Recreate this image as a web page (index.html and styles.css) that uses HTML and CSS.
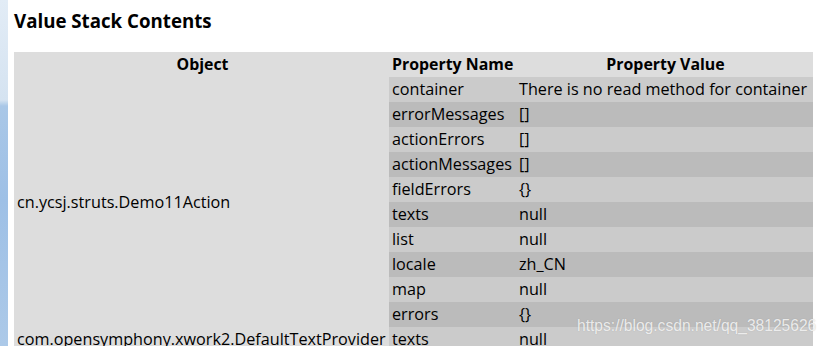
FILE: index.html
```html
<!DOCTYPE html>
<html>
<head>
<meta charset="utf-8">
<link rel="stylesheet" href="styles.css">
</head>
<body>
<div class="frame"></div>
<main class="page">
  <h3 class="title">Value Stack Contents</h3>
  <table class="stack">
    <colgroup>
      <col class="c-obj">
      <col class="c-name">
      <col class="c-val">
    </colgroup>
    <tr class="head">
      <th>Object</th>
      <th class="left">Property Name</th>
      <th>Property Value</th>
    </tr>
    <tr class="odd"><td class="obj" rowspan="10">cn.ycsj.struts.Demo11Action</td><td>container</td><td>There is no read method for container</td></tr>
    <tr class="even"><td>errorMessages</td><td>[]</td></tr>
    <tr class="odd"><td>actionErrors</td><td>[]</td></tr>
    <tr class="even"><td>actionMessages</td><td>[]</td></tr>
    <tr class="odd"><td>fieldErrors</td><td>{}</td></tr>
    <tr class="even"><td>texts</td><td>null</td></tr>
    <tr class="odd"><td>list</td><td>null</td></tr>
    <tr class="even"><td>locale</td><td>zh_CN</td></tr>
    <tr class="odd"><td>map</td><td>null</td></tr>
    <tr class="even"><td>errors</td><td>{}</td></tr>
    <tr class="odd"><td class="obj">com.opensymphony.xwork2.DefaultTextProvider</td><td>texts</td><td>null</td></tr>
  </table>
</main>
<div class="watermark">https://blog.csdn.net/qq_38125626</div>
</body>
</html>
```
FILE: styles.css
```css
html, body {
  margin: 0;
  padding: 0;
  height: 346px;
  overflow: hidden;
  background: #fff;
}
body {
  display: flex;
  font-family: "Open Sans", "Noto Sans", sans-serif;
  color: #000;
}
.frame {
  width: 8px;
  flex: none;
  background: linear-gradient(to bottom, #e2ecf6 0px, #d5e3f1 100px, #a9c7e7 106px, #9ec0e6 200px, #acc9e8 346px);
}
.page {
  padding-left: 6px;
  width: 799px;
  flex: none;
}
.title {
  margin: 9px 0 0 0;
  font-size: 18.7px;
  line-height: 24px;
  font-weight: 700;
  height: 43px;
}
.stack {
  border-collapse: collapse;
  table-layout: fixed;
  width: 799px;
  font-size: 16.2px;
  background: #ddd;
}
.c-obj { width: 375px; }
.c-name { width: 127px; }
.c-val { width: 297px; }
.stack th, .stack td {
  height: 25px;
  padding: 0 1px 0 3px;
  line-height: 25px;
  white-space: nowrap;
  overflow: visible;
  box-sizing: border-box;
}
.stack th {
  font-weight: 700;
  font-size: 15.9px;
  text-align: center;
}
.stack th.left { text-align: left; }
.stack td { text-align: left; }
.stack tr.odd td { background: #cbcbcb; }
.stack tr.even td { background: #bbb; }
.stack tr td.obj { background: #ddd; }
.watermark {
  position: absolute;
  left: 577px;
  top: 317px;
  font-family: "Liberation Sans", Arial, sans-serif;
  font-size: 15.6px;
  color: rgba(255, 255, 255, 0.8);
  text-shadow: 0 0 1px rgba(120, 120, 120, 0.45);
  white-space: nowrap;
}
```
